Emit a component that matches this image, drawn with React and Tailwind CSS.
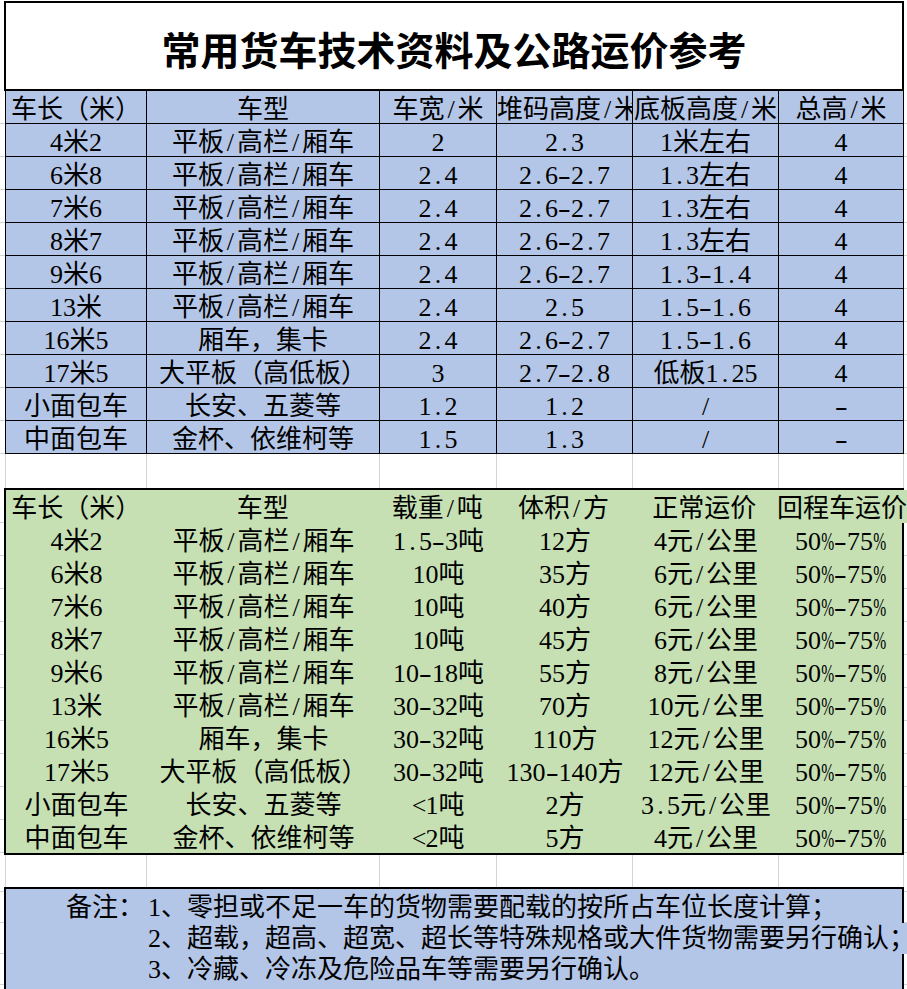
import React from 'react'

// 宋体-style half-width: every ASCII char sits in a 13px box
function Half({ ch }) {
  if (ch === '-') {
    return (
      <span className="inline-flex w-[13px] justify-center">
        <span className="inline-block scale-x-150">-</span>
      </span>
    )
  }
  if (ch === '%') {
    return (
      <span className="inline-flex w-[13px] justify-center">
        <span className="inline-block shrink-0 scale-x-60">%</span>
      </span>
    )
  }
  return <span className="inline-flex w-[13px] justify-center">{ch}</span>
}

function Txt({ s }) {
  const out = []
  let buf = ''
  Array.from(s).forEach((ch, i) => {
    if (ch.charCodeAt(0) < 128) {
      if (buf) {
        out.push(<span key={'c' + i}>{buf}</span>)
        buf = ''
      }
      out.push(<Half key={i} ch={ch} />)
    } else {
      buf += ch
    }
  })
  if (buf) out.push(<span key="end">{buf}</span>)
  return <span className="whitespace-nowrap">{out}</span>
}

const W1 = ['w-[141px]', 'w-[233px]', 'w-[117px]', 'w-[136px]', 'w-[146px]', 'w-[125px]']
const W2 = ['w-[141px]', 'w-[233px]', 'w-[117px]', 'w-[136px]', 'w-[146px]', 'w-[123px]']

const specHead = ['车长（米）', '车型', '车宽/米', '堆码高度/米', '底板高度/米', '总高/米']
const specRows = [
  ['4米2', '平板/高栏/厢车', '2', '2.3', '1米左右', '4'],
  ['6米8', '平板/高栏/厢车', '2.4', '2.6-2.7', '1.3左右', '4'],
  ['7米6', '平板/高栏/厢车', '2.4', '2.6-2.7', '1.3左右', '4'],
  ['8米7', '平板/高栏/厢车', '2.4', '2.6-2.7', '1.3左右', '4'],
  ['9米6', '平板/高栏/厢车', '2.4', '2.6-2.7', '1.3-1.4', '4'],
  ['13米', '平板/高栏/厢车', '2.4', '2.5', '1.5-1.6', '4'],
  ['16米5', '厢车，集卡', '2.4', '2.6-2.7', '1.5-1.6', '4'],
  ['17米5', '大平板（高低板）', '3', '2.7-2.8', '低板1.25', '4'],
  ['小面包车', '长安、五菱等', '1.2', '1.2', '/', '-'],
  ['中面包车', '金杯、依维柯等', '1.5', '1.3', '/', '-'],
]

const priceHead = ['车长（米）', '车型', '载重/吨', '体积/方', '正常运价', '回程车运价']
const priceRows = [
  ['4米2', '平板/高栏/厢车', '1.5-3吨', '12方', '4元/公里', '50%-75%'],
  ['6米8', '平板/高栏/厢车', '10吨', '35方', '6元/公里', '50%-75%'],
  ['7米6', '平板/高栏/厢车', '10吨', '40方', '6元/公里', '50%-75%'],
  ['8米7', '平板/高栏/厢车', '10吨', '45方', '6元/公里', '50%-75%'],
  ['9米6', '平板/高栏/厢车', '10-18吨', '55方', '8元/公里', '50%-75%'],
  ['13米', '平板/高栏/厢车', '30-32吨', '70方', '10元/公里', '50%-75%'],
  ['16米5', '厢车，集卡', '30-32吨', '110方', '12元/公里', '50%-75%'],
  ['17米5', '大平板（高低板）', '30-32吨', '130-140方', '12元/公里', '50%-75%'],
  ['小面包车', '长安、五菱等', '<1吨', '2方', '3.5元/公里', '50%-75%'],
  ['中面包车', '金杯、依维柯等', '<2吨', '5方', '4元/公里', '50%-75%'],
]

function SpecRow({ cells, head }) {
  return (
    <div className="flex h-[33px]">
      <div className="w-[5px] border-b border-[#d4d4d4]" />
      <div className="flex border-l border-black bg-[#b4c6e7]">
        {cells.map((c, i) => (
          <div
            key={i}
            className={`${W1[i]} h-[33px] border-r border-b border-black flex items-center pt-[6px] overflow-hidden ${
              head && i === 3 ? 'justify-start' : 'justify-center'
            }`}
          >
            <Txt s={c} />
          </div>
        ))}
      </div>
      <div className="w-[3px] border-b border-[#d4d4d4]" />
    </div>
  )
}

function PriceRow({ cells, head }) {
  return (
    <div className="flex h-[33px]">
      <div className="w-[4px] border-b border-[#d4d4d4]" />
      <div
        className={`flex bg-[#c6e0b4] border-l-2 border-black ${
          head ? 'w-[903px]' : 'w-[900px] border-r-2'
        }`}
      >
        {cells.map((c, i) => (
          <div
            key={i}
            className={`${head && i === 5 ? 'flex-1 justify-start' : W2[i] + ' justify-center'} h-[33px] flex items-center pt-[5px]`}
          >
            <Txt s={c} />
          </div>
        ))}
      </div>
      {!head && <div className="w-[3px] border-b border-[#d4d4d4]" />}
    </div>
  )
}

function EmptyRow({ h }) {
  return (
    <div className={`flex ${h}`}>
      <div className="w-[6px] border-r border-[#d4d4d4]" />
      {W1.map((w, i) => (
        <div key={i} className={`${w} border-r border-[#d4d4d4]`} />
      ))}
    </div>
  )
}

function Bar() {
  return (
    <div className="flex">
      <div className="w-[4px]" />
      <div className="w-[900px] h-[2px] bg-black" />
    </div>
  )
}

function NoteRow({ label, text, open, h = 'h-[31px]' }) {
  return (
    <div className={`flex ${h}`}>
      <div className="w-[4px] border-b border-[#d4d4d4]" />
      <div
        className={`flex items-center bg-[#b4c6e7] border-l-2 border-black pl-[60px] ${
          open ? 'w-[903px]' : 'w-[900px] border-r-2'
        }`}
      >
        <div className="w-[82px] shrink-0 whitespace-nowrap">{label}</div>
        {text && <Txt s={text} />}
      </div>
      {!open && <div className="w-[3px] border-b border-[#d4d4d4]" />}
    </div>
  )
}

export default function App() {
  return (
    <div className="w-[907px] h-[989px] overflow-hidden bg-white text-black font-['Liberation_Serif','Noto_Sans_CJK_SC',serif] text-[26px] leading-[26px]">
      <div className="flex pt-[1px]">
        <div className="w-[4px]" />
        <div className="w-[900px] h-[90px] border-2 border-black flex items-center justify-center pt-[3px] font-['Noto_Sans_CJK_SC',sans-serif] font-bold text-[39px] leading-[40px]">
          常用货车技术资料及公路运价参考
        </div>
      </div>

      <SpecRow cells={specHead} head />
      {specRows.map((r, i) => (
        <SpecRow key={i} cells={r} />
      ))}

      <EmptyRow h="h-[34px]" />

      <Bar />
      <PriceRow cells={priceHead} head />
      {priceRows.map((r, i) => (
        <PriceRow key={i} cells={r} />
      ))}
      <Bar />

      <EmptyRow h="h-[32px]" />

      <Bar />
      <NoteRow h="h-[3px]" />
      <NoteRow label="备注：" text="1、零担或不足一车的货物需要配载的按所占车位长度计算；" />
      <NoteRow text="2、超载，超高、超宽、超长等特殊规格或大件货物需要另行确认；" open />
      <NoteRow text="3、冷藏、冷冻及危险品车等需要另行确认。" />
      <NoteRow h="h-[20px]" />
    </div>
  )
}
